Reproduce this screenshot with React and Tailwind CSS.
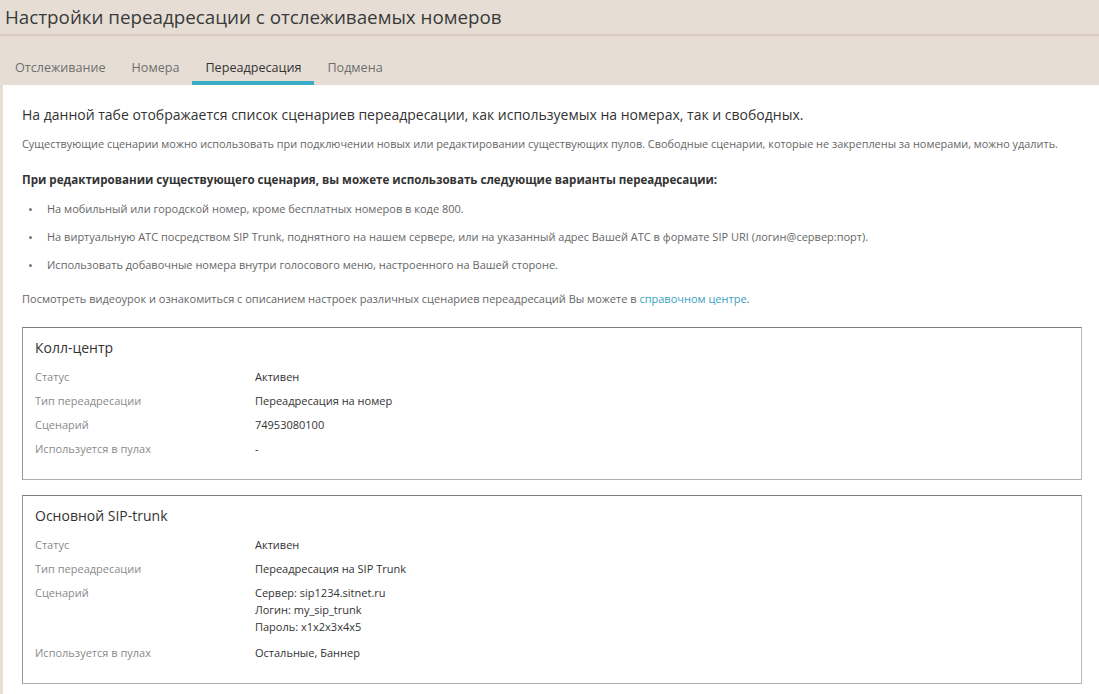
import React from 'react'

const FONT = { fontFamily: '"Open Sans", "Noto Sans", "Liberation Sans", sans-serif' }

const TABS = ['Отслеживание', 'Номера', 'Переадресация', 'Подмена']

const BULLETS = [
    'На мобильный или городской номер, кроме бесплатных номеров в коде 800.',
    'На виртуальную АТС посредством SIP Trunk, поднятного на нашем сервере, или на указанный адрес Вашей АТС в формате SIP URI (логин@сервер:порт).',
    'Использовать добавочные номера внутри голосового меню, настроенного на Вашей стороне.'
]

const CARDS = [
    {
        title: 'Колл-центр',
        rows: [
            ['Статус', ['Активен']],
            ['Тип переадресации', ['Переадресация на номер']],
            ['Сценарий', ['74953080100']],
            ['Используется в пулах', ['-']]
        ]
    },
    {
        title: 'Основной SIP-trunk',
        rows: [
            ['Статус', ['Активен']],
            ['Тип переадресации', ['Переадресация на SIP Trunk']],
            ['Сценарий', ['Сервер: sip1234.sitnet.ru', 'Логин: my_sip_trunk', 'Пароль: x1x2x3x4x5']],
            ['Используется в пулах', ['Остальные, Баннер']]
        ]
    }
]

function Card({ title, rows }) {
    return (
        <div className="border border-t-[#7f7a74] border-l-[#9a958f] border-r-[#bdb8b2] border-b-[#b3aea8] bg-white pl-[12px] pr-4 pt-[10px] pb-[22px]">
            <div className="text-[14px] leading-[20px] text-[#333]">{title}</div>
            <div className="mt-[10px] flex flex-col gap-[7px]">
                {rows.map(([label, values]) => (
                    <div key={label} className="flex text-[11px] leading-[17px]">
                        <div className="w-[220px] shrink-0 text-[#8a8a8a]">{label}</div>
                        <div className={`text-[#333] ${values.length > 1 ? 'pb-[2px]' : ''}`}>
                            {values.map((v) => (
                                <div key={v}>{v}</div>
                            ))}
                        </div>
                    </div>
                ))}
            </div>
        </div>
    )
}

export default function App() {
    return (
        <div className="min-h-[694px] bg-[#e6ded5]" style={FONT}>
            <h1 className="pl-[5px] pt-[5px] text-[18.8px] leading-[24px] text-[#3a3a3a]">
                Настройки переадресации с отслеживаемых номеров
            </h1>
            <div className="mt-[5px] h-[2px] bg-[#d9ccbf]" />

            <div className="mt-[16px] flex pl-[2px]">
                {TABS.map((t) => {
                    const active = t === 'Переадресация'
                    return (
                        <div
                            key={t}
                            className={`px-[13px] pt-[7px] pb-[4px] border-b-4 text-[12.6px] leading-[18px] ${
                                active ? 'border-[#3aacc6] text-[#333]' : 'border-transparent text-[#6e6e6e]'
                            }`}
                        >
                            {t}
                        </div>
                    )
                })}
            </div>

            <div className="ml-[3px] bg-white pl-[19px] pr-[17px] pt-[20px] pb-[24px]">
                <p className="text-[14px] leading-[20px] text-[#333]">
                    На данной табе отображается список сценариев переадресации, как используемых на номерах, так и свободных.
                </p>
                <p className="mt-[11px] text-[10.9px] leading-[16px] text-[#666]">
                    Существующие сценарии можно использовать при подключении новых или редактировании существующих пулов. Свободные сценарии, которые не закреплены за номерами, можно удалить.
                </p>
                <p className="mt-[20px] text-[11.6px] leading-[16px] font-bold text-[#333]">
                    При редактировании существующего сценария, вы можете использовать следующие варианты переадресации:
                </p>
                <ul className="mt-[13px] flex flex-col gap-[12px]">
                    {BULLETS.map((b) => (
                        <li key={b} className="flex items-center text-[11px] leading-[16px] text-[#666]">
                            <span className="ml-[7px] mr-[15px] h-[3px] w-[3px] shrink-0 rounded-full bg-[#777]" />
                            {b}
                        </li>
                    ))}
                </ul>
                <p className="mt-[18px] text-[11px] leading-[16px] text-[#666]">
                    Посмотреть видеоурок и ознакомиться с описанием настроек различных сценариев переадресаций Вы можете в{' '}
                    <a className="text-[#3a9fc2]">справочном центре</a>.
                </p>

                <div className="mt-[20px] flex flex-col gap-[15px]">
                    {CARDS.map((c) => (
                        <Card key={c.title} {...c} />
                    ))}
                </div>
            </div>
        </div>
    )
}
